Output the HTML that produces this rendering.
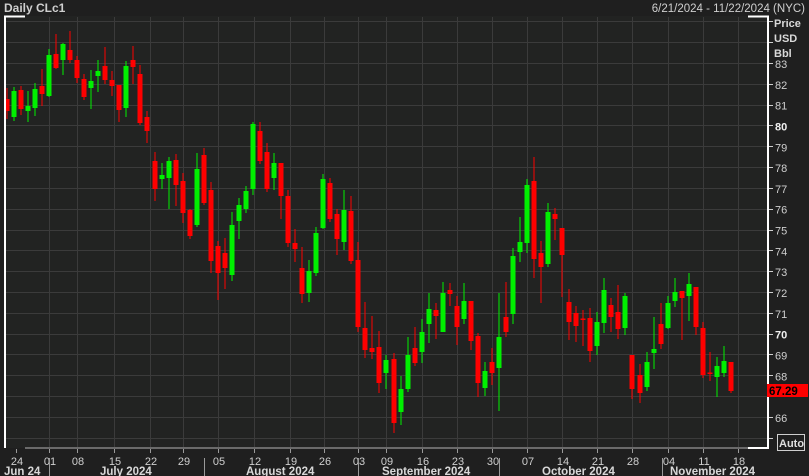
<!DOCTYPE html>
<html><head><meta charset="utf-8"><style>
html,body{margin:0;padding:0;background:#1f1f1f;width:809px;height:476px;overflow:hidden}
svg{display:block;font-family:"Liberation Sans",sans-serif}
</style></head><body>
<svg id="s" width="809" height="476" viewBox="0 0 809 476" xmlns="http://www.w3.org/2000/svg">
<rect x="0" y="0" width="809" height="476" fill="#1f1f1f"/>
<rect x="4" y="16" width="764" height="432" fill="#222322"/>
<g id="grid" stroke="#3b3b3b" stroke-width="1"></g>
<g id="c"></g>
<g stroke="#ffffff" stroke-width="2" fill="none">
<path d="M5 448V16.5H25"/>
<path d="M748 16.5H768V448H748"/>
</g>
<line x1="25" y1="448" x2="748" y2="448" stroke="#6a6a6a" stroke-width="2"/>
<text x="4" y="12" fill="#cfcfcf" font-size="12" font-weight="bold">Daily CLc1</text>
<text x="805" y="12" fill="#cfcfcf" font-size="11.5" text-anchor="end">6/21/2024 - 11/22/2024 (NYC)</text>
<g fill="#d8d8d8" font-size="11" font-weight="bold">
<text x="774" y="27">Price</text><text x="774" y="42">USD</text><text x="774" y="57">Bbl</text>
</g>
<g id="pl" fill="#cfcfcf" font-size="11"></g>
<rect x="767" y="384" width="41" height="13" fill="#ff0000"/>
<text x="769" y="395" fill="#000" font-size="11.5" font-weight="bold">67.29</text>
<rect x="777.5" y="434.5" width="27" height="16" fill="none" stroke="#cfcfcf"/>
<text x="779" y="447" fill="#e0e0e0" font-size="11" font-weight="bold">Auto</text>
<g id="xl" fill="#cfcfcf" font-size="11" text-anchor="middle"></g>
<g fill="#d8d8d8" font-size="11.5" font-weight="bold">
<text x="4" y="475">Jun 24</text>
<text x="100" y="475">July 2024</text>
<text x="246" y="475">August 2024</text>
<text x="382" y="475">September 2024</text>
<text x="542" y="475">October 2024</text>
<text x="670" y="475">November 2024</text>
</g>
<g stroke="#9a9a9a" stroke-width="1">
<line x1="49.5" y1="458" x2="49.5" y2="476"/>
<line x1="204.5" y1="458" x2="204.5" y2="476"/>
<line x1="358.5" y1="458" x2="358.5" y2="476"/>
<line x1="499.5" y1="458" x2="499.5" y2="476"/>
<line x1="662.5" y1="458" x2="662.5" y2="476"/>
</g>
</svg>
<script>
var NS="http://www.w3.org/2000/svg";
function el(p,t,a,txt){var e=document.createElementNS(NS,t);for(var k in a)e.setAttribute(k,a[k]);if(txt!=null)e.textContent=txt;p.appendChild(e);return e;}
var g=document.getElementById('grid'),pl=document.getElementById('pl'),xl=document.getElementById('xl');
function yp(p){return 63+(83-p)*20.82;}
for(var p=85;p>=64;p--){var y=Math.round(yp(p))+0.5;if(y<17||y>447)continue;el(g,'line',{x1:5,x2:768,y1:y,y2:y});
el(g,'line',{x1:768,x2:773,y1:y,y2:y,stroke:'#cfcfcf'});}
for(var p=83;p>=66;p--){if(p==67)continue;var y=yp(p)+5;var a={x:775,y:y};if(p==80||p==70){a['font-weight']='bold';a.fill='#f0f0f0';}el(pl,'text',a,String(p));}
el(pl,'text',{x:775,y:yp(67)+1},'67');
var xs=[[16,'24'],[49,'01'],[77,'08'],[114,'15'],[150,'22'],[183,'29'],[218,'05'],[254,'12'],[290,'19'],[324,'26'],[358,'03'],[386,'09'],[422,'16'],[457,'23'],[492,'30'],[527,'07'],[562,'14'],[597,'21'],[632,'28'],[668,'04'],[703,'11'],[738,'18']];
xs.forEach(function(d){var x=d[0]+0.5;if(d[0]>20)el(g,'line',{x1:x,x2:x,y1:17,y2:447});el(g,'line',{x1:x,x2:x,y1:449,y2:453,stroke:'#9a9a9a'});el(xl,'text',{x:d[0]+1,y:465},d[1]);});
var C=[[7,99,111,88,119,0],[14,91,117,87,121,1],[21,90,109,86,115,0],[28,106,111,91,122,1],[35,89,108,83,116,1],[42,86,94,69,106,0],[49,55,96,49,97,1],[56,54,68,34,69,0],[63,44,60,43,75,1],[70,50,60,31,63,0],[77,60,78,56,83,0],[84,79,97,74,100,0],[91,81,88,70,109,1],[98,71,76,60,92,1],[105,66,80,47,84,0],[112,80,86,71,96,0],[119,85,110,85,122,0],[126,66,108,61,117,1],[133,60,67,46,84,0],[140,74,123,65,125,0],[147,117,131,111,143,0],
[155,161,189,152,201,0],[162,175,179,163,189,1],[169,161,178,157,209,1],[176,160,185,154,206,0],[183,181,213,173,223,0],[190,210,236,209,239,0],[197,169,225,153,227,1],[204,155,203,148,205,0],[211,190,261,182,273,0],[218,246,273,241,300,0],[225,253,268,238,289,0],[232,225,275,212,281,1],[239,205,221,198,239,1],[246,191,209,186,213,1],[253,124,189,122,195,1],[260,131,161,122,164,0],[267,152,189,143,192,0],[274,163,178,153,190,1],[281,163,196,163,219,0],[288,196,243,190,247,0],[295,243,249,229,262,0],[302,268,294,247,303,0],[309,271,293,260,302,1],[316,233,273,227,276,1],[323,179,228,174,229,1],[330,183,219,178,222,0],[337,214,239,209,255,0],[344,210,242,190,250,1],[351,211,261,196,264,0],[358,260,327,242,332,0],[365,328,350,302,358,0],[372,348,352,316,359,0],[379,347,383,331,393,0],[386,360,373,355,389,1],[394,359,423,353,433,0],[401,389,412,376,425,1],[408,355,389,337,392,1],[415,348,363,327,366,0],[422,332,352,319,363,1],[429,309,324,293,343,1],[436,310,316,303,339,0],[443,293,332,282,332,1],[450,290,294,283,306,0],[457,306,327,296,345,0],[464,301,319,283,324,1],[471,301,341,301,350,0],[478,336,383,333,397,0],[485,371,388,362,396,1],[492,362,373,348,385,0],[499,337,368,293,411,1],[506,317,332,282,337,0],[513,256,314,248,324,1],[520,242,252,217,262,1],[527,185,243,179,253,1],[534,181,259,157,278,0],[541,253,267,241,303,0],[548,212,264,203,267,1],[555,214,219,208,240,0],[562,228,255,228,297,0],[569,302,322,289,340,0],[576,313,326,306,342,0],[583,318.5,320,310,346,0],[590,318,351,308,362,0],[597,322,346,312,355,1],[604,290,323,278,333,1],[611,305,317,298,332,0],[618,312,329,285,339,0],[625,296,328,293,335,1],
[632,355,389,355,399,0],[640,375,393,364,403,0],[647,362,387,352,391,1],[654,349,353,317,369,1],[661,324,344,303,349,0],[668,303,328,296,329,1],[675,292,301,278,307,1],[682,291,298,291,340,0],[689,284,296,273,321,1],[696,287,327,287,335,0],[703,328,375,322,378,0],[710,372.5,374,352,381,0],[717,366,377,357,397,1],[724,361,373,346,377,1],[731,362,391,362,393,0]];
var cg=document.getElementById('c');
C.forEach(function(d){var col=d[5]?'#00f000':'#ff0000';el(cg,'rect',{x:d[0]-0.5,y:d[3],width:1,height:d[4]-d[3],fill:col});el(cg,'rect',{x:d[0]-2.5,y:d[1],width:5,height:Math.max(1.5,d[2]-d[1]),fill:col});});
</script>
</body></html>
